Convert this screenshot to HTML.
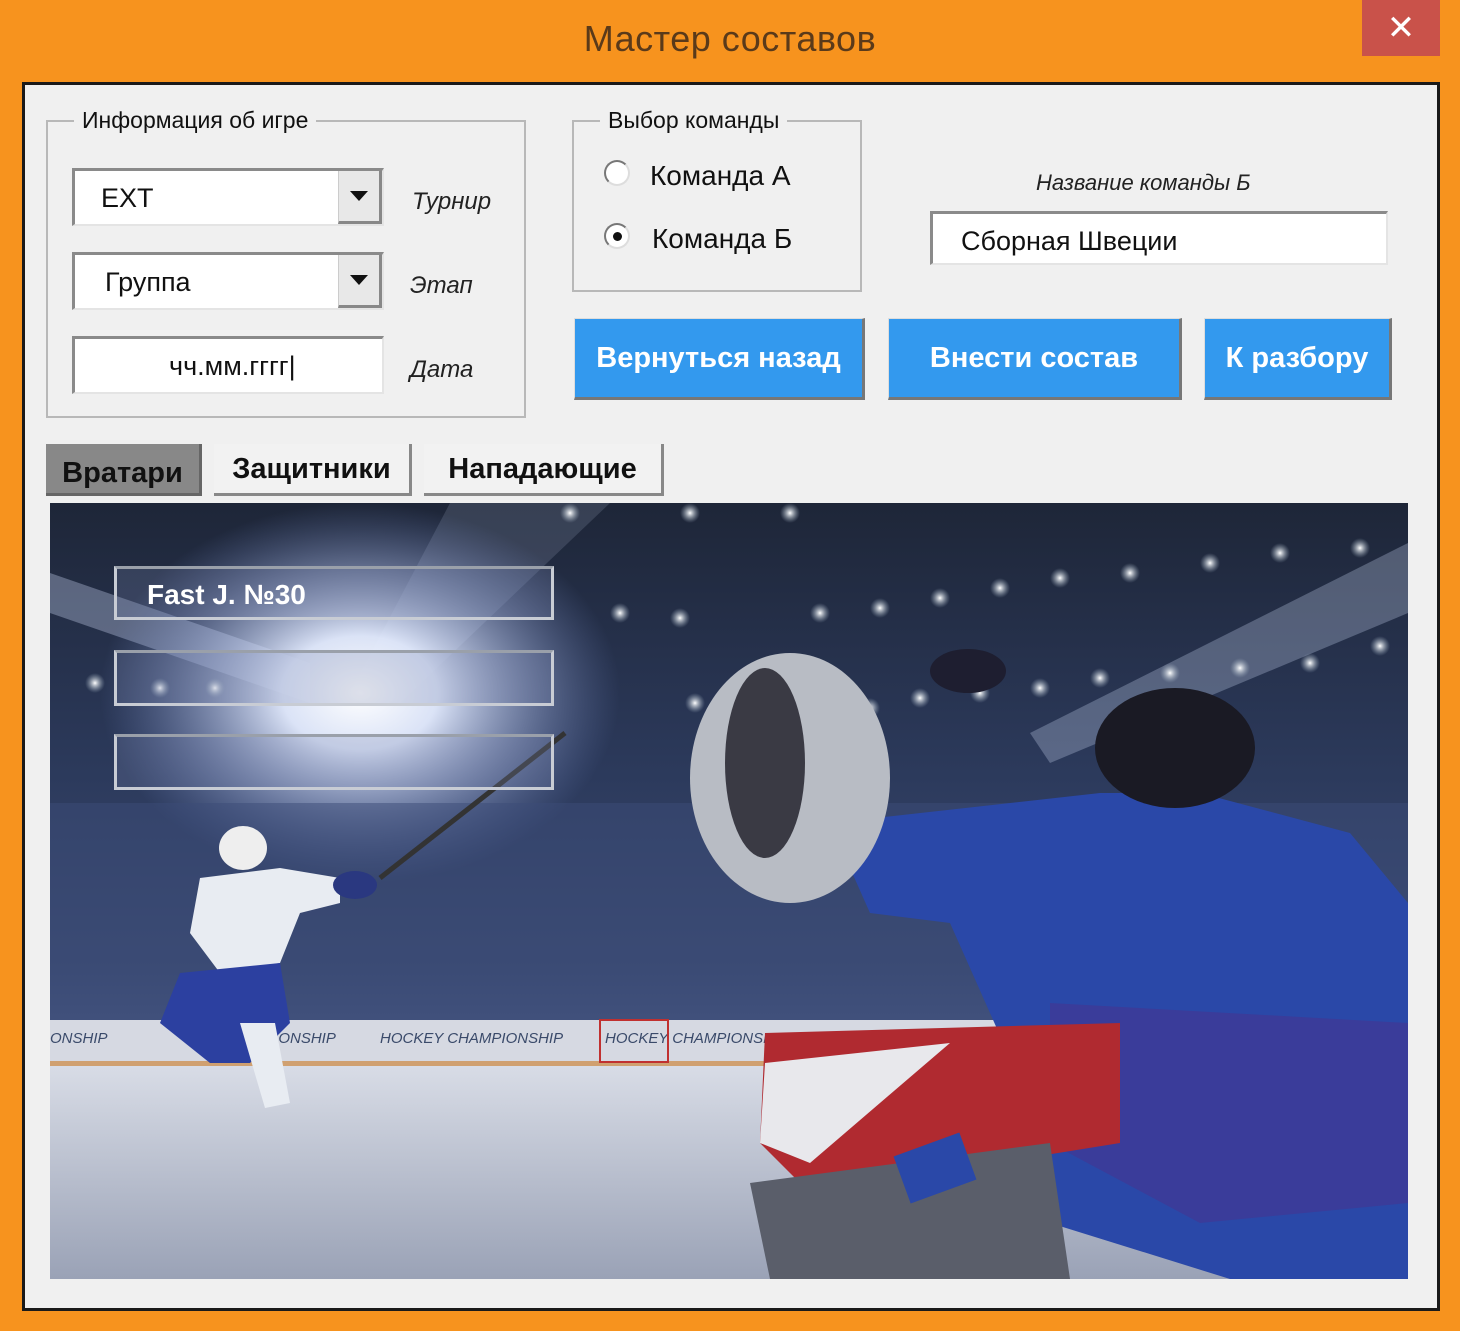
<!DOCTYPE html>
<html><head><meta charset="utf-8">
<style>
*{margin:0;padding:0;box-sizing:border-box}
body{width:1460px;height:1331px;background:#f7931e;position:relative;overflow:hidden;font-family:"Liberation Sans","DejaVu Sans",sans-serif}
.abs{position:absolute}
.title{left:0;width:1460px;top:18px;text-align:center;font-size:36px;color:#5a3a1a;letter-spacing:0.5px}
.close{left:1362px;top:0;width:78px;height:56px;background:#c9524a;color:#fff;font-size:34px;text-align:center;line-height:56px}
.panel{left:22px;top:82px;width:1418px;height:1229px;background:#f0f0f0;border:3px solid #1a1a1a}
.grp{border:2px solid #b8b8b8}
.leg{background:#f0f0f0;padding:0 8px;font-size:23px;color:#111;line-height:24px}
.inp{background:#fff;border-top:3px solid #8a8a8a;border-left:3px solid #8a8a8a;border-bottom:2px solid #e4e4e4;border-right:2px solid #e4e4e4;font-size:27px;color:#111}
.dd{background:#e8e8e8;border-left:1px solid #ccc;border-bottom:3px solid #888;border-right:3px solid #888}
.lbl{font-style:italic;font-size:24px;color:#222}
.btn{background:#3399ee;color:#fff;font-weight:bold;font-size:29px;text-align:center;border-right:3px solid #777;border-bottom:3px solid #777;border-top:1px solid #ddd;border-left:1px solid #ddd}
.tab{font-weight:bold;font-size:29px;color:#111;text-align:center;border-right:3px solid #888;border-bottom:3px solid #888;background:#f2f2f2;line-height:50px}
.pbox{border:3px solid #c8ccd4;border-top-color:#9aa0aa;background:rgba(120,130,170,0.25);color:#fff;font-weight:bold;font-size:28px}
</style></head><body>
<div class="abs title">Мастер составов</div>
<div class="abs close">✕</div>
<div class="abs panel"></div>

<div class="abs grp" style="left:46px;top:120px;width:480px;height:298px"></div>
<div class="abs leg" style="left:74px;top:108px">Информация об игре</div>
<div class="abs inp" style="left:72px;top:168px;width:312px;height:58px;padding:12px 0 0 26px">EXT</div>
<div class="abs dd" style="left:338px;top:171px;width:44px;height:53px"></div>
<div class="abs" style="left:350px;top:191px;width:0;height:0;border-left:9px solid transparent;border-right:9px solid transparent;border-top:10px solid #111"></div>
<div class="abs lbl" style="left:412px;top:188px">Турнир</div>
<div class="abs inp" style="left:72px;top:252px;width:312px;height:58px;padding:12px 0 0 30px">Группа</div>
<div class="abs dd" style="left:338px;top:255px;width:44px;height:53px"></div>
<div class="abs" style="left:350px;top:275px;width:0;height:0;border-left:9px solid transparent;border-right:9px solid transparent;border-top:10px solid #111"></div>
<div class="abs lbl" style="left:410px;top:272px">Этап</div>
<div class="abs inp" style="left:72px;top:336px;width:312px;height:58px;padding:12px 0 0 94px">чч.мм.гггг<span style="font-weight:normal">|</span></div>
<div class="abs lbl" style="left:410px;top:356px">Дата</div>

<div class="abs grp" style="left:572px;top:120px;width:290px;height:172px"></div>
<div class="abs leg" style="left:600px;top:108px">Выбор команды</div>
<div class="abs" style="left:604px;top:160px;width:26px;height:26px;border-radius:50%;background:#fff;border:2px solid #ddd;border-top-color:#777;border-left-color:#777"></div>
<div class="abs" style="left:650px;top:160px;font-size:28px;color:#111">Команда А</div>
<div class="abs" style="left:604px;top:223px;width:26px;height:26px;border-radius:50%;background:#fff;border:2px solid #ddd;border-top-color:#777;border-left-color:#777"></div>
<div class="abs" style="left:613px;top:232px;width:9px;height:9px;border-radius:50%;background:#111"></div>
<div class="abs" style="left:652px;top:223px;font-size:28px;color:#111">Команда Б</div>

<div class="abs lbl" style="left:1036px;top:170px;font-size:22px">Название команды Б</div>
<div class="abs inp" style="left:930px;top:211px;width:458px;height:54px;padding:12px 0 0 28px">Сборная Швеции</div>

<div class="abs btn" style="left:574px;top:318px;width:291px;height:82px;line-height:78px">Вернуться назад</div>
<div class="abs btn" style="left:888px;top:318px;width:294px;height:82px;line-height:78px">Внести состав</div>
<div class="abs btn" style="left:1204px;top:318px;width:188px;height:82px;line-height:78px">К разбору</div>

<div class="abs tab" style="left:46px;top:444px;width:156px;height:52px;background:#888;border-color:#666;line-height:58px">Вратари</div>
<div class="abs tab" style="left:214px;top:444px;width:198px;height:52px">Защитники</div>
<div class="abs tab" style="left:424px;top:444px;width:240px;height:52px">Нападающие</div>

<svg class="abs" style="left:50px;top:503px" width="1358" height="776" viewBox="0 0 1358 776">
<defs>
<linearGradient id="bg" x1="0" y1="0" x2="0" y2="1">
<stop offset="0" stop-color="#1e2638"/><stop offset="0.35" stop-color="#2c3a5c"/><stop offset="0.6" stop-color="#3a4a72"/><stop offset="0.7" stop-color="#4a5a86"/></linearGradient>
<linearGradient id="ice" x1="0" y1="0" x2="0" y2="1"><stop offset="0" stop-color="#d8dce6"/><stop offset="1" stop-color="#9aa2b6"/></linearGradient>
<radialGradient id="spot" cx="0.5" cy="0.5" r="0.5"><stop offset="0" stop-color="#fff"/><stop offset="0.3" stop-color="#e4ecff" stop-opacity="0.95"/><stop offset="1" stop-color="#7a90d0" stop-opacity="0"/></radialGradient>
<radialGradient id="dot" cx="0.5" cy="0.5" r="0.5"><stop offset="0" stop-color="#fff"/><stop offset="1" stop-color="#9ab" stop-opacity="0"/></radialGradient>
</defs>
<rect width="1358" height="776" fill="url(#bg)"/>
<polygon points="0,70 260,160 260,200 0,110" fill="#c8d4f0" opacity="0.35"/>
<polygon points="1358,40 1358,110 1000,260 980,230" fill="#c8d4f0" opacity="0.3"/>
<polygon points="400,0 560,0 350,200 300,190" fill="#c8d4f0" opacity="0.15"/>
<ellipse cx="310" cy="190" rx="260" ry="190" fill="url(#spot)"/>
<g fill="url(#dot)">
<circle cx="520" cy="10" r="10"/><circle cx="640" cy="10" r="10"/><circle cx="740" cy="10" r="10"/><circle cx="570" cy="110" r="10"/><circle cx="630" cy="115" r="10"/><circle cx="770" cy="110" r="10"/><circle cx="830" cy="105" r="10"/><circle cx="890" cy="95" r="10"/><circle cx="950" cy="85" r="10"/><circle cx="1010" cy="75" r="10"/><circle cx="1080" cy="70" r="10"/><circle cx="1160" cy="60" r="10"/><circle cx="1230" cy="50" r="10"/><circle cx="1310" cy="45" r="10"/><circle cx="1260" cy="160" r="10"/><circle cx="1190" cy="165" r="10"/><circle cx="1120" cy="170" r="10"/><circle cx="1050" cy="175" r="10"/><circle cx="990" cy="185" r="10"/><circle cx="930" cy="190" r="10"/><circle cx="870" cy="195" r="10"/><circle cx="820" cy="205" r="10"/><circle cx="645" cy="200" r="10"/><circle cx="45" cy="180" r="10"/><circle cx="110" cy="185" r="10"/><circle cx="165" cy="185" r="10"/><circle cx="1330" cy="143" r="10"/>
</g>
<rect x="0" y="300" width="1358" height="220" fill="#3c4b78" opacity="0.5"/>
<rect x="0" y="517" width="1358" height="45" fill="#d6d9e2"/>
<rect x="0" y="558" width="1358" height="5" fill="#d0a070"/>
<rect x="0" y="563" width="1358" height="213" fill="url(#ice)"/>
<g font-size="15" fill="#3a4a6a" font-style="italic">
<text x="0" y="540">ONSHIP</text><text x="170" y="540">CHAMPIONSHIP</text><text x="330" y="540">HOCKEY CHAMPIONSHIP</text><text x="555" y="540">HOCKEY CHAMPIONSHIP</text><text x="760" y="540">HOCKEY CHAMP</text></g>
<rect x="550" y="517" width="68" height="42" fill="none" stroke="#c03030" stroke-width="2"/>
<line x1="330" y1="375" x2="515" y2="230" stroke="#333" stroke-width="5"/>
<ellipse cx="193" cy="345" rx="24" ry="22" fill="#eee"/>
<polygon points="150,375 230,365 290,375 290,400 250,410 230,460 170,470 140,430" fill="#e8ecf2"/>
<polygon points="130,470 230,460 240,520 200,560 160,560 110,520" fill="#2c40a0"/>
<polygon points="190,520 225,520 240,600 215,605" fill="#e8ecf2"/>
<ellipse cx="305" cy="382" rx="22" ry="14" fill="#2a3880"/>
<ellipse cx="918" cy="168" rx="38" ry="22" fill="#1e1e30"/>
<polygon points="780,320 1050,290 1150,290 1300,330 1358,400 1358,776 1180,776 1000,720 980,600 900,420 820,410" fill="#2a48a8"/>
<polygon points="1000,500 1358,520 1358,700 1150,720 1000,640" fill="#3a3c9a"/>
<ellipse cx="1125" cy="245" rx="80" ry="60" fill="#1a1a24"/>
<ellipse cx="740" cy="275" rx="100" ry="125" fill="#b8bcc4"/>
<ellipse cx="715" cy="260" rx="40" ry="95" fill="#3a3a44"/>
<polygon points="715,530 1070,520 1070,640 760,690 710,640" fill="#b02a30"/>
<polygon points="715,560 900,540 760,660 710,640" fill="#e8e8ec"/>
<polygon points="700,680 1000,640 1020,776 720,776" fill="#5a5e6a"/>
<rect x="850" y="640" width="70" height="50" fill="#2a48a8" transform="rotate(-20 885 665)"/>
</svg>

<div class="abs pbox" style="left:114px;top:566px;width:440px;height:54px;padding:10px 0 0 30px">Fast J. №30</div>
<div class="abs pbox" style="left:114px;top:650px;width:440px;height:56px"></div>
<div class="abs pbox" style="left:114px;top:734px;width:440px;height:56px"></div>
</body></html>
